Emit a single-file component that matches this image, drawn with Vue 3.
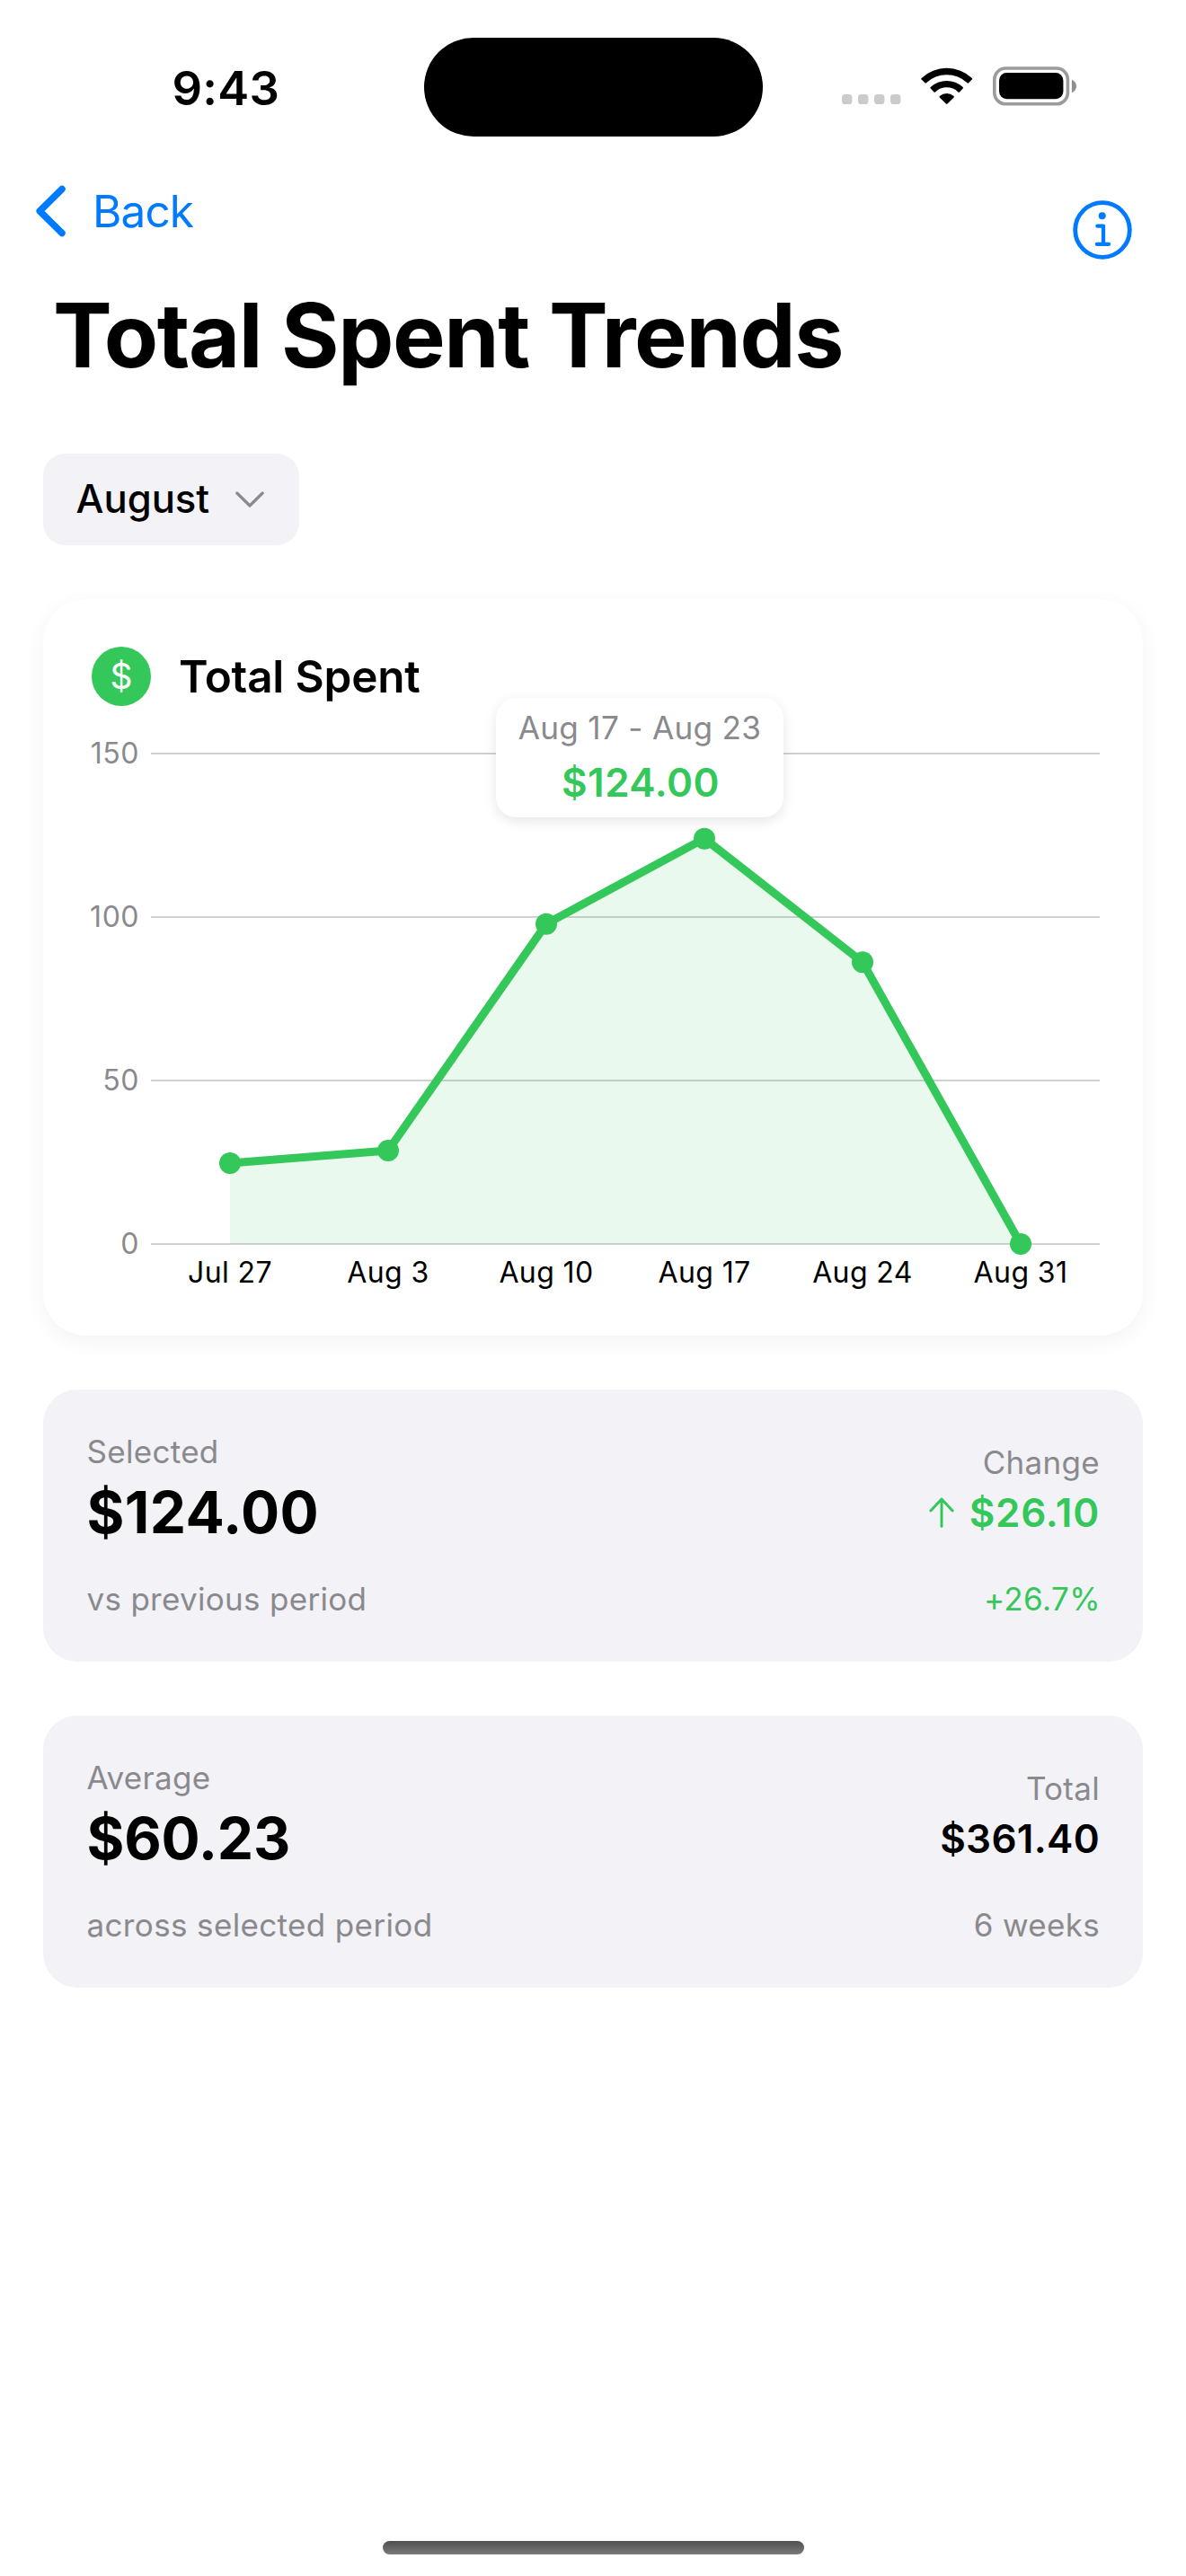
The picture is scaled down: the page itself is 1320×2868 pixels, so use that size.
<script setup>
const points = [
  { label: 'Jul 27', value: 24.7 },
  { label: 'Aug 3', value: 28.6 },
  { label: 'Aug 10', value: 97.9 },
  { label: 'Aug 17', value: 124 },
  { label: 'Aug 24', value: 86.2 },
  { label: 'Aug 31', value: 0 },
]
const ticks = [150, 100, 50, 0]

const plotWidth = 1056
const plotHeight = 546
const step = plotWidth / points.length
const yOf = (value) => plotHeight * (1 - value / 150)
const coords = points.map((p, i) => ({ x: step * (i + 0.5), y: yOf(p.value) }))
const line = coords.map((c) => `${c.x},${c.y.toFixed(1)}`).join(' ')
const area = `${coords[0].x},${plotHeight} ${line} ${coords[coords.length - 1].x},${plotHeight}`

const stats = [
  { label: 'Selected', value: '$124.00', note: 'vs previous period', sideLabel: 'Change', sideValue: '$26.10', sideNote: '+26.7%', up: true },
  { label: 'Average', value: '$60.23', note: 'across selected period', sideLabel: 'Total', sideValue: '$361.40', sideNote: '6 weeks', up: false },
]
</script>

<template>
  <div class="screen">
    <header class="status">
      <span class="time">9:43</span>
      <div class="island"></div>
      <svg class="indicators" width="262" height="44" viewBox="0 0 262 44">
        <g fill="#cbcbcb">
          <rect v-for="n in 4" :key="n" :x="(n - 1) * 18" y="31" width="11.4" height="11" rx="3.6" />
        </g>
        <g transform="translate(88 0)">
          <path d="M0.6 12.9 A41 41 0 0 1 56.8 12.9 Q57.6 13.7 56.8 14.5 L53 18.3 Q52.3 19 51.5 18.3 A33 33 0 0 0 5.9 18.3 Q5.1 19 4.4 18.3 L0.6 14.5 Q-0.2 13.7 0.6 12.9 Z" />
          <path d="M10.7 23 A26.5 26.5 0 0 1 46.7 23 Q47.5 23.8 46.7 24.6 L42.9 28.4 Q42.2 29.1 41.4 28.4 A18.5 18.5 0 0 0 16 28.4 Q15.2 29.1 14.5 28.4 L10.7 24.6 Q9.9 23.8 10.7 23 Z" />
          <path d="M20.8 33 A12 12 0 0 1 36.6 33 Q37.3 33.8 36.6 34.5 L29.5 41.6 Q28.7 42.3 27.9 41.6 L20.8 34.5 Q20.1 33.8 20.8 33 Z" />
        </g>
        <rect x="169.8" y="2" width="81.6" height="39.8" rx="12.5" fill="none" stroke="#9b9b9b" stroke-width="3.6" />
        <rect x="175" y="7" width="71.4" height="29.2" rx="8.5" />
        <path d="M255.900 14.800 Q261 17 261 22 Q261 27 255.900 29.200 Z" fill="#8f8f8f" />
      </svg>
    </header>

    <nav class="nav">
      <a class="back">
        <svg width="34" height="58" viewBox="0 0 34 58" fill="none" stroke="#007aff" stroke-width="7.5" stroke-linecap="round" stroke-linejoin="round">
          <path d="M29 4.5 L4.2 29 L29 53.5" />
        </svg>
        <span>Back</span>
      </a>
      <svg class="info" width="66" height="66" viewBox="0 0 66 66">
        <circle cx="33" cy="33" r="30.3" fill="none" stroke="#007aff" stroke-width="4.8" />
        <circle cx="32.7" cy="17.3" r="4" fill="#007aff" />
        <path d="M27.4 28.7 H34 V48.8 M26.8 48.8 H40" fill="none" stroke="#007aff" stroke-width="4.3" stroke-linecap="round" stroke-linejoin="round" />
      </svg>
    </nav>

    <h1 class="title">Total Spent Trends</h1>

    <button class="month">
      <span>August</span>
      <svg width="32" height="20" viewBox="0 0 32 20" fill="none" stroke="#8a8a8e" stroke-width="3.2" stroke-linecap="round" stroke-linejoin="round">
        <path d="M1.8 3 L16 17 L30.2 3" />
      </svg>
    </button>

    <section class="card">
      <div class="card-head">
        <span class="badge">$</span>
        <h2>Total Spent</h2>
      </div>
      <div class="chart">
        <div class="y-axis">
          <span v-for="t in ticks" :key="t">{{ t }}</span>
        </div>
        <div class="plot">
          <svg :width="plotWidth" :height="plotHeight" :viewBox="`0 0 ${plotWidth} ${plotHeight}`">
            <line v-for="t in ticks" :key="t" x1="0" :x2="plotWidth" :y1="yOf(t)" :y2="yOf(t)" stroke="#d1d1d3" stroke-width="2" />
            <polygon :points="area" fill="#34c759" fill-opacity="0.105" />
            <polyline :points="line" fill="none" stroke="#34c759" stroke-width="9" stroke-linejoin="round" />
            <circle v-for="c in coords" :key="c.x" :cx="c.x" :cy="c.y" r="12" fill="#34c759" />
          </svg>
          <div class="tooltip">
            <span class="range">Aug 17 - Aug 23</span>
            <strong>$124.00</strong>
          </div>
        </div>
        <div class="x-axis">
          <span v-for="p in points" :key="p.label">{{ p.label }}</span>
        </div>
      </div>
    </section>

    <section v-for="s in stats" :key="s.label" class="stat">
      <div class="row">
        <div class="main">
          <span class="label">{{ s.label }}</span>
          <strong class="value" :class="{ tight: !s.up }">{{ s.value }}</strong>
        </div>
        <div class="side">
          <span class="label">{{ s.sideLabel }}</span>
          <strong class="side-value" :class="{ up: s.up }">
            <svg v-if="s.up" width="28" height="34" viewBox="0 0 28 34" fill="none" stroke="#34c759" stroke-width="3" stroke-linecap="round" stroke-linejoin="round">
              <path d="M14 2 V32.2 M1.9 15 L14 2 L26.1 15" />
            </svg>
            <span>{{ s.sideValue }}</span>
          </strong>
        </div>
      </div>
      <div class="row notes">
        <span class="label" :class="{ wide: !s.up }">{{ s.note }}</span>
        <span class="label" :class="{ pct: s.up }">{{ s.sideNote }}</span>
      </div>
    </section>

    <div class="home"></div>
  </div>
</template>

<style>
body {
  margin: 0;
  background: #fff;
}
</style>

<style scoped>
.screen {
  display: flex;
  flex-direction: column;
  width: 1320px;
  height: 2868px;
  overflow: hidden;
  background: #fff;
  color: #000;
  font-family: Inter, "Liberation Sans", sans-serif;
}

.status {
  display: flex;
  align-items: center;
  height: 111px;
  padding: 42px 0 0 191.5px;
}
.time {
  width: 280px;
  font-size: 52.5px;
  font-weight: 600;
  line-height: 60px;
  letter-spacing: 0.2px;
}
.island {
  width: 377px;
  height: 110px;
  margin-bottom: 1px;
  border-radius: 56px;
  background: #000;
}
.indicators {
  margin: 0 0 3px 88.5px;
}

.nav {
  display: flex;
  justify-content: space-between;
  align-items: flex-start;
  height: 113px;
  padding: 47px 60px 0 40px;
}
.back {
  display: flex;
  align-items: center;
  gap: 29px;
  height: 70px;
  color: #007aff;
  font-size: 49.5px;
  line-height: 70px;
  letter-spacing: -0.9px;
}
.info {
  margin-top: 22.5px;
}

.title {
  margin: 0 0 0 59px;
  font-size: 98.6px;
  font-weight: 700;
  line-height: 120px;
  letter-spacing: -1.4px;
}

.month {
  display: flex;
  justify-content: space-between;
  align-items: center;
  box-sizing: border-box;
  width: 285px;
  height: 102px;
  margin: 72px 0 0 48px;
  padding: 0 39px 0 36.5px;
  border: 0;
  border-radius: 25px;
  background: #f2f2f7;
  color: #000;
  font: 500 43.6px/60px Inter, "Liberation Sans", sans-serif;
}

.card {
  box-sizing: border-box;
  height: 820px;
  margin: 60px 48px 0;
  padding-top: 53px;
  border-radius: 48px;
  background: #fff;
  box-shadow: 0 6px 24px rgba(0, 0, 0, 0.05);
}
.card-head {
  display: flex;
  gap: 31px;
  height: 68px;
  padding-left: 54px;
}
.badge {
  width: 66px;
  height: 66px;
  border-radius: 50%;
  background: #34c759;
  color: #fff;
  font-size: 39px;
  line-height: 66px;
  text-align: center;
}
.card-head h2 {
  margin: 0;
  font-size: 49.5px;
  font-weight: 600;
  line-height: 67px;
  letter-spacing: -0.18px;
}

.chart {
  display: grid;
  grid-template-columns: 107px 1056px;
  column-gap: 13px;
  margin-top: 51px;
}
.y-axis {
  display: flex;
  flex-direction: column;
  justify-content: space-between;
  margin: -20.5px 0 -19.5px;
  color: #8a8a8e;
  font-size: 32px;
  line-height: 40px;
  letter-spacing: 0.5px;
  text-align: right;
}
.plot {
  position: relative;
  height: 546px;
}
.plot svg {
  display: block;
  overflow: visible;
}
.x-axis {
  grid-column: 2;
  display: grid;
  grid-template-columns: repeat(6, 1fr);
  margin-top: 12px;
  font-size: 32px;
  line-height: 40px;
  letter-spacing: 0.4px;
  text-align: center;
}
.tooltip {
  position: absolute;
  top: -62px;
  left: 384px;
  display: flex;
  flex-direction: column;
  align-items: center;
  gap: 13px;
  box-sizing: border-box;
  width: 320px;
  height: 133px;
  padding-top: 11px;
  border-radius: 22px;
  background: #fff;
  box-shadow: 0 4px 14px rgba(0, 0, 0, 0.1);
}
.range {
  color: #8a8a8e;
  font-size: 35.2px;
  line-height: 44px;
  letter-spacing: 0.27px;
}
.tooltip strong {
  padding-left: 2px;
  color: #34c759;
  font-size: 44px;
  font-weight: 600;
  line-height: 52px;
  letter-spacing: 0.5px;
}

.stat {
  box-sizing: border-box;
  height: 303px;
  margin: 60px 48px 0;
  padding: 45px 48px 0 48.5px;
  border-radius: 38px;
  background: #f2f2f7;
}
.row {
  display: flex;
  justify-content: space-between;
  align-items: center;
}
.main,
.side {
  display: flex;
  flex-direction: column;
  gap: 4px;
}
.side {
  align-items: flex-end;
}
.label {
  color: #8a8a8e;
  font-size: 35px;
  line-height: 48px;
  letter-spacing: 0.3px;
}
.wide {
  letter-spacing: 0.36px;
}
.value {
  font-size: 64px;
  font-weight: 700;
  line-height: 80px;
  letter-spacing: 0.4px;
}
.tight {
  letter-spacing: -0.2px;
}
.side-value {
  display: flex;
  align-items: center;
  gap: 16.5px;
  font-size: 44px;
  font-weight: 600;
  line-height: 56px;
  letter-spacing: 0.3px;
}
.up {
  color: #34c759;
  letter-spacing: 0.8px;
}
.notes {
  margin-top: 32px;
}
.pct {
  margin-right: -1px;
  color: #34c759;
  letter-spacing: 0.4px;
}

.home {
  width: 469px;
  height: 15px;
  margin: auto auto 24px;
  border-radius: 8px;
  background: linear-gradient(#505050, #7a7a7a);
}
</style>
